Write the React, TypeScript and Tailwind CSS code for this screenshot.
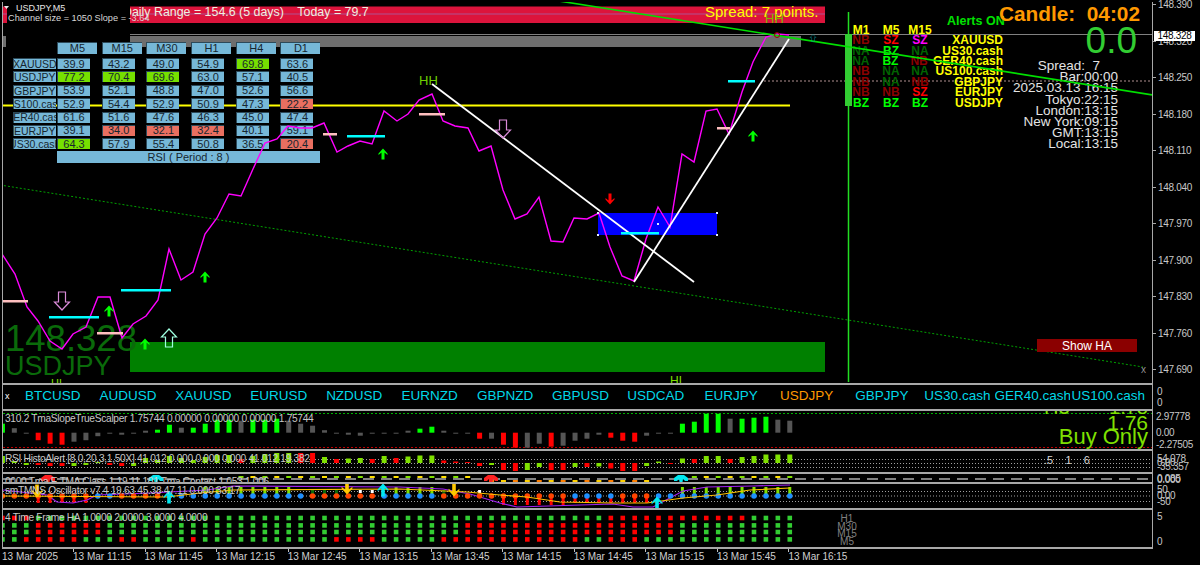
import React from 'react';

// bar x position: M5 bars are 11.93px apart
const cx = (i: number) => 2.4 + 11.93 * i;
const pts = (list: number[][]) => list.map(p => p.join(',')).join(' ');

const price = [[2,255],[15,275],[27,308],[38,322],[50,342],[62,350],[73,335],[86,328],[98,298],[110,298],[122,339],[133,325],[146,317],[158,301],[169,250],[181,281],[193,273],[205,235],[217,219],[229,195],[241,197],[253,170],[265,144],[277,140],[288,127],[300,129],[312,129],[324,124],[337,153],[348,147],[360,142],[372,145],[384,112],[397,122],[408,115],[419,101],[432,95],[443,122],[455,127],[468,129],[479,152],[491,147],[503,191],[515,220],[527,215],[539,198],[551,242],[563,243],[574,219],[587,220],[599,214],[610,248],[622,277],[634,282],[646,240],[658,208],[670,228],[682,155],[694,163],[706,112],[717,110],[729,135],[742,93],[753,63],[766,38],[777,35],[789,36]];

const rsiTable = [
  ['XAUUSD', '39.9', '43.2', '49.0', '54.9', '69.8', '63.6'],
  ['USDJPY', '77.2', '70.4', '69.6', '63.0', '57.1', '40.5'],
  ['GBPJPY', '53.9', '52.1', '48.8', '47.0', '52.6', '56.6'],
  ['US100.cash', '52.9', '54.4', '52.9', '50.9', '47.3', '22.2'],
  ['GER40.cash', '61.6', '51.6', '47.6', '46.3', '45.0', '47.4'],
  ['EURJPY', '39.1', '34.0', '32.1', '32.4', '40.1', '59.1'],
  ['US30.cash', '64.3', '57.9', '55.4', '50.8', '36.5', '20.4'],
];

const signals = [
  ['XAUUSD', 'NB', 'SZ', 'SZm'],
  ['US30.cash', 'NA', 'BZ', 'NA'],
  ['GER40.cash', 'NA', 'BZ', 'NB'],
  ['US100.cash', 'NB', 'NA', 'NA'],
  ['GBPJPY', 'NB', 'NA', 'NB'],
  ['EURJPY', 'NB', 'NB', 'SZ'],
  ['USDJPY', 'BZ', 'BZ', 'BZ'],
];
const signalColor: Record<string, string> = {
  NB: 'text-[#8b0000]',
  NA: 'text-[#006400]',
  BZ: 'text-[#00ff00]',
  SZ: 'text-[#ff0000]',
  SZm: 'text-[#ff00ff]',
};

const clock = ['Spread:  7', 'Bar:00:00', '2025.03.13 16:15', 'Tokyo:22:15', 'London:13:15', 'New York:09:15', 'GMT:13:15', 'Local:13:15'];
const symbols = ['BTCUSD', 'AUDUSD', 'XAUUSD', 'EURUSD', 'NZDUSD', 'EURNZD', 'GBPNZD', 'GBPUSD', 'USDCAD', 'EURJPY', 'USDJPY', 'GBPJPY', 'US30.cash', 'GER40.cash', 'US100.cash'];
const axisPrices = ['148.390', '148.320', '148.250', '148.180', '148.110', '148.040', '147.970', '147.900', '147.830', '147.760', '147.690'];
const times = ['11:15', '11:45', '12:15', '12:45', '13:15', '13:45', '14:15', '14:45', '15:15', '15:45', '16:15'];

// slope histogram: g green, d grey, r red
const slope: [string, number][] = [['g',9],['d',4.5],['d',-1],['r',-7.5],['r',-11],['r',-12],['d',-9],['d',-7.5],['d',-3.5],['d',-1],['d',-2],['d',-1],['d',2],['g',3],['g',8],['d',5],['g',5],['g',9],['g',13],['g',13],['d',12],['g',13],['g',13],['g',14],['d',12],['d',9],['d',7],['d',2.5],['d',-1],['d',-2],['d',-3],['d',-1],['d',-1],['d',-1],['d',2],['g',4],['g',6],['d',2],['d',-1],['d',-1],['r',-6],['d',-6],['r',-12],['r',-15],['d',-15],['d',-11],['r',-14],['d',-13],['d',-8],['d',-6],['d',-2],['r',-5],['r',-8],['r',-9],['d',-3],['d',-1],['d',-1],['g',9],['g',11],['g',19],['g',19],['d',14],['g',14],['g',15],['g',16],['d',13],['d',12]];
const slopeFill: Record<string, string> = { g: '#00ff00', d: '#555555', r: '#ff0000' };

const rsiHist: [string, number][] = [['l',7],['l',2],['l',-2],['r',-2],['r',-3],['r',-3],['l',-3],['l',-2],['l',1],['r',-2],['r',-3],['l',-3],['l',5],['l',3],['l',7],['l',5],['l',3],['l',6],['l',8],['l',8],['r',4],['l',7],['l',9],['l',10],['l',10],['r',10],['r',10],['l',6],['r',4],['l',4.5],['l',5],['r',4],['l',7],['r',5],['l',6.5],['l',7.5],['l',7.5],['r',2.5],['r',1.5],['r',1],['r',-3],['l',-2],['r',-7],['r',-8],['l',-7],['l',-4],['r',-7],['r',-7],['l',-4],['r',-4],['l',-3.5],['r',-5.5],['r',-8],['r',-8],['l',-3],['l',1.5],['r',-1],['l',4.5],['r',4],['l',7],['l',7],['r',4],['l',6],['l',7],['l',8.5],['l',8.5],['l',8.5]];

const isOrange = (i: number) => i <= 7 || (i >= 10 && i <= 13) || (i >= 26 && i <= 31) || (i >= 37 && i <= 47) || (i >= 52 && i <= 54);
const purple = [[3,490],[47,495],[57,502],[73,503],[87,500],[97,495],[150,493],[207,490],[233,486],[400,487],[443,489],[470,494],[500,503],[517,507],[580,505],[613,504],[633,507],[653,507],[683,491],[707,487],[753,486],[790,485]];
const gold = [[3,496],[167,497],[200,493],[233,490],[400,489],[467,492],[500,495],[527,497],[560,502],[613,503],[647,503],[683,498],[717,495],[750,490],[790,488]];

const inRange = (i: number, a: number, b: number) => i >= a && i <= b;
const haRows = [
  { y: 518, red: (i: number) => inRange(i, 0, 2) || inRange(i, 51, 62) },
  { y: 525.4, red: (i: number) => inRange(i, 3, 8) || inRange(i, 39, 56) },
  { y: 532, red: (i: number) => inRange(i, 3, 8) || inRange(i, 39, 56) },
  { y: 539.4, red: (i: number) => inRange(i, 2, 6) || inRange(i, 10, 11) || i === 16 || inRange(i, 28, 31) || inRange(i, 37, 48) || inRange(i, 51, 53) },
];
const bars = Array.from({ length: 67 }, (_, i) => i);

function Arrow({ x, y, fill, size = 1, down = false }: { x: number; y: number; fill: string; size?: number; down?: boolean }) {
  return (
    <polygon
      transform={`translate(${x} ${y}) scale(${size} ${down ? -size : size})`}
      fill={fill}
      points="0,-5.5 4.5,-0.5 4.5,1 1.5,-1.5 1.5,5.5 -1.5,5.5 -1.5,-1.5 -4.5,1 -4.5,-0.5"
    />
  );
}

function Hollow({ x, y, stroke, down = false, size = 1 }: { x: number; y: number; stroke: string; down?: boolean; size?: number }) {
  return (
    <polygon
      transform={`translate(${x} ${y}) scale(${size} ${down ? -size : size})`}
      fill="none"
      stroke={stroke}
      strokeWidth="1.2"
      points="0,-9 7.5,-1 3.5,-1 3.5,9 -3.5,9 -3.5,-1 -7.5,-1"
    />
  );
}

function Arch({ x, fill }: { x: number; fill: string }) {
  return <polygon fill={fill} points={pts([[x - 7, 481], [x - 7, 478], [x - 3, 475], [x + 3, 475], [x + 7, 478], [x + 7, 481], [x + 4, 481], [x + 2, 479], [x + 1.5, 482], [x - 1.5, 482], [x - 2, 479], [x - 4, 481]])} />;
}

function Sheet({ children }: { children: React.ReactNode }) {
  return (
    <svg width="1200" height="565" className="absolute left-0 top-0">
      {children}
    </svg>
  );
}

function Pane({ box, layer, axis, children }: { box: string; layer: string; axis?: React.ReactNode; children: React.ReactNode }) {
  return (
    <div className={`flex ${box}`}>
      <div className="relative w-[1151px] overflow-hidden border-x border-b-2 border-[#a8a8a8] bg-black">
        <div className={`absolute left-[-3px] h-[565px] w-[1200px] ${layer}`}>{children}</div>
      </div>
      <div className="relative w-[47px] pl-[4px] text-[10px] leading-none tracking-[-0.3px] text-[#c8c8c8]">{axis}</div>
    </div>
  );
}

// stacked scale labels of an indicator pane, some overlap on purpose
function Scale({ labels, row, pad }: { labels: string[]; row: string; pad: string }) {
  return (
    <div className={`flex flex-col ${pad}`}>
      {labels.map((l, i) => (
        <span key={i} className={`whitespace-nowrap ${row}`}>{l}</span>
      ))}
    </div>
  );
}

function Legend({ text, pos }: { text: string; pos: string }) {
  return <span className={`absolute left-[5px] whitespace-pre text-[10.2px] leading-none tracking-[-0.3px] text-[#c8c8c8] ${pos}`}>{text}</span>;
}

function Cell({ value }: { value: string }) {
  const n = parseFloat(value);
  const bg = n >= 64 ? 'bg-[#76e000]' : n <= 35 ? 'bg-[#e96f60]' : 'bg-[#76b8d8]';
  return <div className={`mr-[11.7px] flex h-[11px] w-[33px] items-center justify-center border-t border-l border-[#2c4a5a] ${bg}`}>{value}</div>;
}

export default function App() {
  return (
    <div className="relative h-[565px] w-[1200px] overflow-hidden bg-black pl-[2px] pt-[2px] font-['Liberation_Sans',Arial,sans-serif]">
      {/* main chart */}
      <Pane
        box="h-[383px]"
        layer="top-[-3px]"
        axis={
          <>
            <div className="-ml-[4px] -mt-[2px] flex flex-col">
              {axisPrices.map(p => (
                <div key={p} className="flex h-[36.5px] items-start gap-[2px]">
                  <div className="mt-[4px] h-px w-[3px] bg-[#a8a8a8]" />
                  <span>{p}</span>
                </div>
              ))}
            </div>
            <div className="absolute left-[1px] top-[29px] flex h-[10px] w-[41px] items-center justify-center bg-white text-black">148.328</div>
          </>
        }
      >
        <Sheet>
          <rect x="130" y="37" width="671" height="11" fill="#6e6e6e" />
          <rect x="3" y="37" width="3" height="11" fill="#6e6e6e" />
          <rect x="130" y="7.5" width="695" height="16.5" fill="#dc143c" />
          <rect x="3" y="7.5" width="5" height="16.5" fill="#dc143c" />
          <line x1="3" y1="15" x2="825" y2="15" stroke="#b05090" />
          <line x1="130" y1="35.5" x2="1153" y2="35.5" stroke="#808080" />
          <rect x="130" y="343" width="695" height="30" fill="#008000" />
          <rect x="598" y="214" width="119" height="22" fill="#0000ff" />
          <line x1="3" y1="106.5" x2="790" y2="106.5" stroke="#ffff00" strokeWidth="2" />
          <line x1="0" y1="186" x2="1143" y2="368" stroke="#00a000" strokeDasharray="2 2" />
          <line x1="764" y1="82" x2="1153" y2="82" stroke="#b09090" strokeDasharray="2 2" />
          <line x1="848.5" y1="13" x2="848.5" y2="383" stroke="#22dd22" strokeWidth="1.5" />
          <rect x="845" y="35" width="7" height="72" fill="#32cd32" />
        </Sheet>

        <span className="absolute left-[123px] top-[6.5px] whitespace-pre text-[12.4px] leading-none text-[#f0f0e0]">Daily Range = 154.6 (5 days)    Today = 79.7</span>
        <span className="absolute left-[705px] top-[5px] whitespace-pre text-[15px] leading-none text-[#ffff00]">Spread: 7 points.</span>
        <div className="absolute left-[7px] top-[3px] h-[47px] w-[123px] bg-black" />

        {/* RSI table */}
        <div className="absolute left-[13px] top-[43px] text-[11px] leading-none text-[#16262f]">
          <div className="ml-[44px] flex">
            {['M5', 'M15', 'M30', 'H1', 'H4', 'D1'].map(h => (
              <div key={h} className="mr-[4.7px] flex h-[12px] w-[40px] items-center justify-center border-t border-l border-[#2c4a5a] bg-[#76b8d8]">{h}</div>
            ))}
          </div>
          <div className="mt-[4px] flex flex-col gap-[2.4px]">
            {rsiTable.map(row => (
              <div key={row[0]} className="flex">
                <div className="mr-[1.5px] flex h-[11px] w-[42.5px] items-center justify-center overflow-hidden border-t border-l border-[#2c4a5a] bg-[#76b8d8] text-[10.5px]">
                  <span className="shrink-0">{row[0]}</span>
                </div>
                {row.slice(1).map((v, i) => (
                  <Cell key={i} value={v} />
                ))}
              </div>
            ))}
          </div>
          <div className="ml-[44px] mt-[2px] flex h-[11.5px] w-[263px] items-center justify-center bg-[#76b8d8]">RSI ( Period : 8 )</div>
        </div>

        <div className="absolute left-[5px] top-[325px] flex flex-col text-[#0a6a0a]">
          <span className="text-[36.5px] leading-[30px]">148.328</span>
          <span className="text-[27px] leading-[24px]">USDJPY</span>
        </div>
        <span className="absolute left-[51px] top-[379px] text-[11px] leading-none text-[#7fe000]">HL</span>
        <span className="absolute left-[670px] top-[376px] text-[12px] leading-none text-[#7fe000]">HL</span>
        <span className="absolute left-[419px] top-[75px] text-[13px] leading-none text-[#6fd000]">HH</span>
        <span className="absolute left-[765px] top-[13px] text-[13px] leading-none text-[#7fb800]">HH</span>

        <span className="absolute left-[16px] top-[4.5px] text-[9px] leading-none text-[#e8e8e8]">USDJPY,M5</span>
        <span className="absolute left-[8px] top-[14.5px] whitespace-pre text-[9.2px] leading-none text-[#d8d8d8]">Channel size = 1050 Slope = -3.64</span>

        {/* multi symbol signals */}
        <div className="absolute left-[846px] top-[25.8px] w-[157px] text-[12px] font-bold leading-[10.4px]">
          <div className="flex h-[10.4px] text-[#ffff00]">
            <span className="w-[30px] text-center">M1</span>
            <span className="w-[30px] text-center">M5</span>
            <span className="w-[28px] text-center">M15</span>
          </div>
          {signals.map(s => (
            <div key={s[0]} className="flex h-[10.4px]">
              <span className={`w-[30px] text-center ${signalColor[s[1]]}`}>{s[1]}</span>
              <span className={`w-[30px] text-center ${signalColor[s[2]]}`}>{s[2]}</span>
              <span className={`w-[28px] text-center ${signalColor[s[3]]}`}>{s[3].slice(0, 2)}</span>
              <span className="flex-1 whitespace-nowrap text-right text-[#ffff00]">{s[0]}</span>
            </div>
          ))}
        </div>

        <span className="absolute left-[947px] top-[16px] text-[12.5px] font-bold leading-none text-[#00e000]">Alerts ON</span>

        {/* candle timer and clocks */}
        <div className="absolute left-[1000px] top-[4.5px] flex w-[140px] flex-col items-end">
          <span className="whitespace-pre text-[20.8px] font-bold leading-[19px] text-[#ff9900]">Candle:  04:02</span>
          <span className="mr-[3px] text-[37px] leading-[35px] text-[#32cd32]">0.0</span>
          <div className="mr-[22px] mt-[2.5px] flex w-full flex-col text-right text-[13.5px] leading-[11.2px] text-[#e4e4e4]">
            {clock.map((c, i) => (
              <span key={c} className={`h-[11.2px] whitespace-pre ${i === 0 ? 'pr-[18px]' : ''}`}>{c}</span>
            ))}
          </div>
        </div>

        <div className="absolute left-[1037px] top-[340px] flex h-[13px] w-[100px] items-center justify-center bg-[#8b0000] text-[12px] text-white">Show HA</div>
        <span className="absolute left-[1141px] top-[366px] text-[10px] leading-none text-[#909090]">x</span>

        <Sheet>
          <polygon points="4,7 9,7 6.5,10" fill="#e8e8e8" />
          <polyline points={pts(price)} fill="none" stroke="#ff00ff" strokeWidth="1.4" />
          <line x1="432" y1="85" x2="694" y2="283" stroke="#ffffff" strokeWidth="1.8" />
          <line x1="634" y1="283" x2="789" y2="40" stroke="#ffffff" strokeWidth="1.8" />
          <line x1="559" y1="2" x2="1153" y2="96" stroke="#00e000" strokeWidth="1.6" />
          {/* pivot dashes */}
          <rect x="49" y="317" width="50" height="2.5" fill="#00ffff" />
          <rect x="121" y="290" width="50" height="2.5" fill="#00ffff" />
          <rect x="347" y="136" width="38" height="2.5" fill="#00ffff" />
          <rect x="728" y="81" width="27" height="2.5" fill="#00ffff" />
          <rect x="621" y="233" width="38" height="2.5" fill="#00ffff" />
          <rect x="3" y="301" width="25" height="2.5" fill="#ffbfbf" />
          <rect x="97" y="333" width="26" height="2.5" fill="#ffbfbf" />
          <rect x="323" y="134" width="14" height="2.5" fill="#ffbfbf" />
          <rect x="419" y="114" width="26" height="2.5" fill="#ffbfbf" />
          <rect x="717" y="128" width="13" height="2.5" fill="#ffbfbf" />
          {/* signal arrows */}
          <Arrow x={109} y={312} fill="#00ff00" />
          <Arrow x={145} y={345} fill="#00ff00" />
          <Arrow x={205} y={278} fill="#00ff00" />
          <Arrow x={383} y={155} fill="#00ff00" />
          <Arrow x={753} y={137} fill="#00ff00" />
          <Arrow x={610} y={200} fill="#ff0000" down />
          <Hollow x={62} y={302} stroke="#d98ad8" down />
          <Hollow x={503} y={130} stroke="#d98ad8" down />
          <Hollow x={169} y={339} stroke="#9fffe0" />
          <Hollow x={813} y={39} stroke="#00a0a0" size={0.4} />
          <circle cx="777" cy="36" r="2.5" fill="none" stroke="#a00000" />
          {/* rectangle handles */}
          {[[598, 214], [717, 214], [598, 236], [717, 236], [658, 225]].map(([x, y]) => (
            <rect key={`${x}-${y}`} x={x - 1} y={y - 1} width="2" height="2" fill="#e0e8ff" />
          ))}
        </Sheet>
      </Pane>

      {/* symbol buttons */}
      <Pane box="h-[26px]" layer="top-[-385px]" axis={<Scale labels={['0', '0']} row="h-[11px]" pad="pt-[2px]" />}>
        <div className="absolute left-[3px] top-[385px] flex h-[23px] items-center pl-[2px]">
          <span className="w-[10px] text-[9px] text-white">x</span>
          {symbols.map(s => (
            <div key={s} className={`flex w-[75.4px] justify-center overflow-hidden whitespace-nowrap text-[13.5px] ${s === 'USDJPY' ? 'text-[#ff9900]' : 'text-[#00d8e8]'}`}>
              <span className="shrink-0">{s}</span>
            </div>
          ))}
        </div>
      </Pane>

      {/* slope histogram */}
      <Pane
        box="h-[40px]"
        layer="top-[-411px]"
        axis={
          <div className="-ml-[1px] flex flex-col pt-[1px]">
            <span className="mb-[6px]">2.97778</span>
            <span className="mb-[2px]">0.00</span>
            <span>-2.27505</span>
          </div>
        }
      >
        <Sheet>
          <line x1="3" y1="413.5" x2="1153" y2="413.5" stroke="#00b000" strokeDasharray="2 2" />
          <line x1="3" y1="447.5" x2="1153" y2="447.5" stroke="#c00000" strokeDasharray="2 2" />
          {slope.map(([c, v], i) => (
            <rect key={i} x={cx(i) - 2.5} y={v > 0 ? 432.7 - v : 432.7} width="5" height={Math.abs(v)} fill={slopeFill[c]} />
          ))}
        </Sheet>
        <Legend text="310.2 TmaSlopeTrueScalper 1.75744 0.00000 0.00000 0.00000 1.75744" pos="top-[413.5px]" />
        <div className="absolute right-[52px] top-[400px] flex flex-col items-end text-[#7fe000]">
          <span className="whitespace-pre text-[20px] leading-[15px]">H3 =    1.78</span>
          <span className="text-[21px] leading-[15px]">1.76</span>
          <span className="text-[22px] leading-[14px]">Buy Only</span>
        </div>
      </Pane>

      {/* RSI histo */}
      <Pane box="h-[23px]" layer="top-[-451px]" axis={<Scale labels={['54.078', '0.00', '-35.357']} row="h-[4px]" pad="pt-[3px]" />}>
        <Sheet>
          <line x1="3" y1="459.5" x2="1153" y2="459.5" stroke="#a0a0a0" strokeDasharray="1 2" />
          <line x1="3" y1="463.5" x2="1153" y2="463.5" stroke="#a0a0a0" strokeDasharray="1 2" />
          <line x1="3" y1="467.5" x2="1153" y2="467.5" stroke="#a0a0a0" strokeDasharray="1 2" />
          {rsiHist.map(([c, v], i) => (
            <rect key={i} x={cx(i) - 2.5} y={v > 0 ? 463 - v : 463} width="5" height={Math.abs(v)} fill={c === 'r' ? '#ff0000' : '#7fe000'} />
          ))}
        </Sheet>
        <Legend text="RSI HistoAlert [8,0,20,3,1,50X] 41.012 0.000 0.000 0.000 41.012 19.382" pos="top-[454px]" />
        <span className="absolute left-[1044px] top-[455px] whitespace-pre text-[11px] leading-none text-[#d8d8d8]">.5    1    6</span>
      </Pane>

      {/* trend strip */}
      <Pane box="h-[10px]" layer="top-[-474px]" axis={<Scale labels={['0.085', '0.000']} row="h-[1px]" pad="pt-[0px]" />}>
        <Sheet>
          <line x1="3" y1="479" x2="1153" y2="479" stroke="#808080" strokeWidth="2" strokeDasharray="11 7" />
          {bars.filter(i => inRange(i, 20, 39) || inRange(i, 57, 66)).map(i => (
            <rect key={i} x={cx(i) - 2.5} y="476" width="5" height="2" fill={i % 2 ? '#ffe000' : '#7fe000'} />
          ))}
          {bars.filter(i => inRange(i, 41, 54)).map(i => (
            <rect key={i} x={cx(i) - 2.5} y="480" width="5" height="2" fill={i % 2 ? '#ff8000' : '#ffd000'} />
          ))}
          <Arch x={48} fill="#ff2020" />
          <Arch x={156} fill="#00e8f0" />
          <Arch x={491} fill="#ff2020" />
          <Arch x={681} fill="#00e8f0" />
        </Sheet>
        <Legend text="0000 Tma E TMA Class 1.19 11.101 Tma Contact 1.053 1.006" pos="top-[477px]" />
      </Pane>

      {/* oscillator */}
      <Pane box="h-[26px]" layer="top-[-484px]" axis={<Scale labels={['50', '0.00', '-50']} row="h-[6px]" pad="pt-[1px]" />}>
        <Sheet>
          <line x1="3" y1="491.5" x2="1153" y2="491.5" stroke="#a0a0a0" strokeDasharray="1 2" />
          <line x1="3" y1="496" x2="1153" y2="496" stroke="#a0a0a0" strokeDasharray="1 2" />
          <line x1="3" y1="501.5" x2="1153" y2="501.5" stroke="#a0a0a0" strokeDasharray="1 2" />
          {bars.map(i => {
            if (inRange(i, 3, 7) || inRange(i, 42, 54)) return <rect key={i} x={cx(i) - 1.5} y="496" width="3" height={inRange(i, 42, 47) ? 9 : 7} fill="#ff0000" />;
            if (inRange(i, 17, 24) || inRange(i, 33, 36) || inRange(i, 57, 66)) return <rect key={i} x={cx(i) - 1.5} y="487" width="3" height="9" fill="#7fe000" />;
            if (inRange(i, 26, 28) || i === 37) return <rect key={i} x={cx(i) - 1.5} y="490" width="3" height="6" fill="#0a6a0a" />;
            if (i === 30 || i === 31 || i === 40) return <rect key={i} x={cx(i) - 1.5} y="490" width="3" height="3" fill="#ffffff" />;
            return null;
          })}
          <polyline points={pts(purple)} fill="none" stroke="#a020f0" strokeWidth="1.2" />
          {bars.map(i => (
            <circle key={i} cx={cx(i)} cy="496" r="2.8" fill={isOrange(i) ? '#ff4500' : '#1e90ff'} />
          ))}
          <polyline points={pts(gold)} fill="none" stroke="#ffc000" strokeWidth="1.2" />
          <Arrow x={37} y={491} fill="#ffc800" size={1.2} down />
          <Arrow x={347} y={488} fill="#ffc800" size={1.2} down />
          <Arrow x={454} y={490} fill="#ffc800" size={1.2} down />
          <Arrow x={169} y={497} fill="#00e8f0" size={1.2} />
          <Arrow x={383} y={490} fill="#00e8f0" size={1.2} />
          <Arrow x={657} y={503} fill="#00e8f0" size={1.2} />
        </Sheet>
        <Legend text="smTMNS Oscillator v7.4 19.63 45.38 47.11 0.000 33.17" pos="top-[486px]" />
      </Pane>

      {/* 4 time frame HA */}
      <Pane box="h-[39px]" layer="top-[-510px]" axis={<Scale labels={['5', '0']} row="h-[25px]" pad="pt-[2px]" />}>
        <Sheet>
          {haRows.map(r =>
            bars.map(i => (
              <rect key={`${r.y}-${i}`} x={cx(i) - 2.3} y={r.y - 2.3} width="4.6" height="4.6" fill={r.red(i) ? '#ff0000' : '#32cd32'} />
            ))
          )}
        </Sheet>
        <Legend text="4 Time Frame HA 1.0000 2.0000 3.0000 4.0000" pos="top-[513px]" />
        <div className="absolute left-[832px] top-[515px] flex w-[30px] flex-col items-center text-[10px] leading-[7.6px] text-[#808080]">
          <span>H1</span>
          <span>M30</span>
          <span>M15</span>
          <span>M5</span>
        </div>
      </Pane>

      {/* time axis */}
      <div className="flex h-[16px] text-[10px] leading-none text-[#d0d0d0]">
        <div className="w-[71px] pt-[3px]">13 Mar 2025</div>
        {times.map(t => (
          <div key={t} className="w-[71.55px] whitespace-nowrap">
            <div className="h-[3px] w-px bg-[#c0c0c0]" />
            <span>13 Mar {t}</span>
          </div>
        ))}
      </div>
    </div>
  );
}
